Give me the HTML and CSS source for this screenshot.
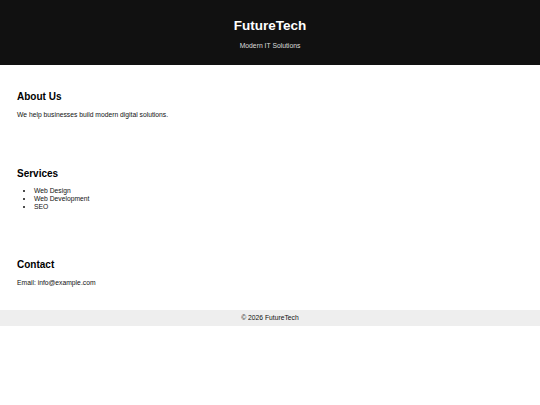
FILE: index.html
```html
<!DOCTYPE html>
<html lang="en">
<head>
<meta charset="utf-8">
<title>FutureTech</title>
<link rel="stylesheet" href="styles.css">
</head>
<body>
<header class="site-header">
  <h1 class="brand">FutureTech</h1>
  <p class="tagline">Modern IT Solutions</p>
</header>
<main>
  <section class="block block-about">
    <h2 class="block-title">About Us</h2>
    <p class="text">We help businesses build modern digital solutions.</p>
  </section>
  <section class="block block-services">
    <h2 class="block-title">Services</h2>
    <ul class="list">
      <li>Web Design</li>
      <li>Web Development</li>
      <li>SEO</li>
    </ul>
  </section>
  <section class="block block-contact">
    <h2 class="block-title">Contact</h2>
    <p class="text">Email: info@example.com</p>
  </section>
</main>
<footer class="site-footer">© 2026 FutureTech</footer>
</body>
</html>
```
FILE: styles.css
```css
html, body {
  margin: 0;
  padding: 0;
  background: #fff;
}
body {
  font-family: "Liberation Sans", Arial, sans-serif;
  color: #111;
  font-size: 6.75px;
  line-height: 8px;
}
.site-header {
  background: #111;
  color: #fff;
  text-align: center;
  padding: 17.5px 0 15px;
}
.brand {
  margin: 0;
  font-size: 13.5px;
  line-height: 15px;
  font-weight: bold;
}
.tagline {
  margin: 9.5px 0 0;
  font-size: 6.8px;
  line-height: 8px;
  color: #ddd;
}
.block {
  padding: 24px 17px;
}
.block-about {
  padding-top: 26px;
}
.block-services {
  padding-top: 25px;
}
.block-contact {
  padding-bottom: 23px;
}
.block-title {
  margin: 0 0 7.7px;
  font-size: 10px;
  line-height: 12px;
  font-weight: bold;
  color: #000;
}
.text {
  margin: 0;
}
.list {
  margin: 0;
  padding-left: 17px;
}
.site-footer {
  background: #eee;
  text-align: center;
  height: 16px;
  line-height: 16px;
  font-size: 6.75px;
}
```
